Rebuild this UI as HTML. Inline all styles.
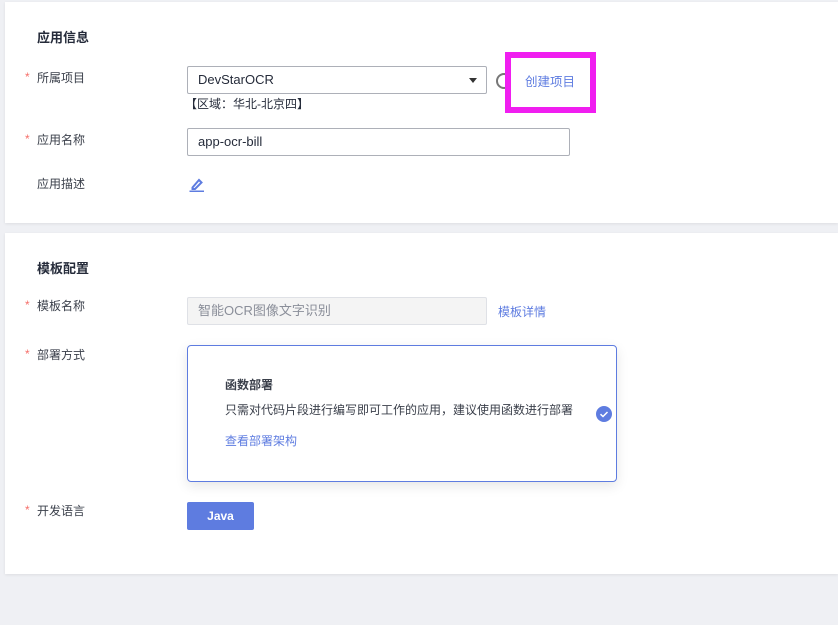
<!DOCTYPE html>
<html><head><meta charset="utf-8"><style>
*{box-sizing:border-box;margin:0;padding:0}
body{width:838px;height:625px;background:#eff0f4;font-family:"Liberation Sans","Noto Sans CJK SC",sans-serif;font-size:12px;color:#252b3a;position:relative;overflow:hidden}
.card{position:absolute;left:5px;width:833px;background:#fff;box-shadow:0 1px 3px rgba(0,0,0,.08)}
.a{position:absolute}
.t{font-weight:bold;font-size:13px;color:#252b3a}
.lbl{color:#3a3f4a;font-size:12px}
.star{color:#f66f6a;position:absolute;left:-12px;top:1px}
.in{position:absolute;border:1px solid #adb0b8;border-radius:2px;height:28px;padding-left:10px;line-height:26px;font-size:13px;color:#252b3a;background:#fff}
.link{color:#5e7ce0}
</style></head><body>
<div class="card" style="top:2px;height:221px">
  <div class="a t" style="left:32px;top:25px">应用信息</div>
  <div class="a lbl" style="left:32px;top:67px"><span class="star">*</span>所属项目</div>
  <div class="in" style="left:182px;top:64px;width:300px">DevStarOCR<span class="a" style="right:9px;top:11px;border-left:4px solid transparent;border-right:4px solid transparent;border-top:5px solid #333;width:0;height:0"></span></div>
  <div class="a" style="left:491px;top:71px;width:16px;height:16px;border:2px solid #777;border-radius:50%"></div>
  <div class="a" style="left:500px;top:50px;width:91px;height:61px;border:6px solid #f01ef0;background:#fff"></div>
  <div class="a link" style="left:520px;top:69px;font-size:12.5px">创建项目</div>
  <div class="a" style="left:180px;top:93px;font-size:12px;color:#252b3a">【区域：华北-北京四】</div>
  <div class="a lbl" style="left:32px;top:129px"><span class="star">*</span>应用名称</div>
  <div class="in" style="left:182px;top:126px;width:383px">app-ocr-bill</div>
  <div class="a lbl" style="left:32px;top:173px">应用描述</div>
  <svg class="a" style="left:184px;top:174px" width="16" height="16" viewBox="0 0 16 16"><path d="M3.5 11.5 L10 4 L12.5 6.5 L6 13 H3.5 Z" fill="none" stroke="#5e7ce0" stroke-width="2"/><path d="M0.5 15.5 H15" stroke="#5e7ce0" stroke-width="2"/></svg>
</div>
<div class="card" style="top:233px;height:341px">
  <div class="a t" style="left:32px;top:25px">模板配置</div>
  <div class="a lbl" style="left:32px;top:64px"><span class="star">*</span>模板名称</div>
  <div class="in" style="left:182px;top:64px;width:300px;background:#f4f4f4;border-color:#dfe1e6;color:#8a8e99">智能OCR图像文字识别</div>
  <div class="a link" style="left:493px;top:70px">模板详情</div>
  <div class="a lbl" style="left:32px;top:113px"><span class="star">*</span>部署方式</div>
  <div class="a" style="left:182px;top:112px;width:430px;height:137px;border:1px solid #5e7ce0;border-radius:4px;box-shadow:0 4px 12px rgba(0,0,0,.1)">
    <div class="a" style="left:37px;top:30px;font-weight:bold;color:#3a3f4a">函数部署</div>
    <div class="a" style="left:37px;top:55px;color:#3a3f4a">只需对代码片段进行编写即可工作的应用，建议使用函数进行部署</div>
    <div class="a link" style="left:37px;top:86px">查看部署架构</div>
    <div class="a" style="left:408px;top:60px;width:16px;height:16px;border-radius:50%;background:#5e7ce0"><svg width="16" height="16"><path d="M4.5 8.2 L7 10.5 L11.5 6" stroke="#fff" stroke-width="1.5" fill="none"/></svg></div>
  </div>
  <div class="a lbl" style="left:32px;top:269px"><span class="star">*</span>开发语言</div>
  <div class="a" style="left:182px;top:269px;width:67px;height:28px;background:#5e7ce0;border-radius:2px;color:#fff;text-align:center;line-height:28px;font-weight:bold">Java</div>
</div>
</body></html>
